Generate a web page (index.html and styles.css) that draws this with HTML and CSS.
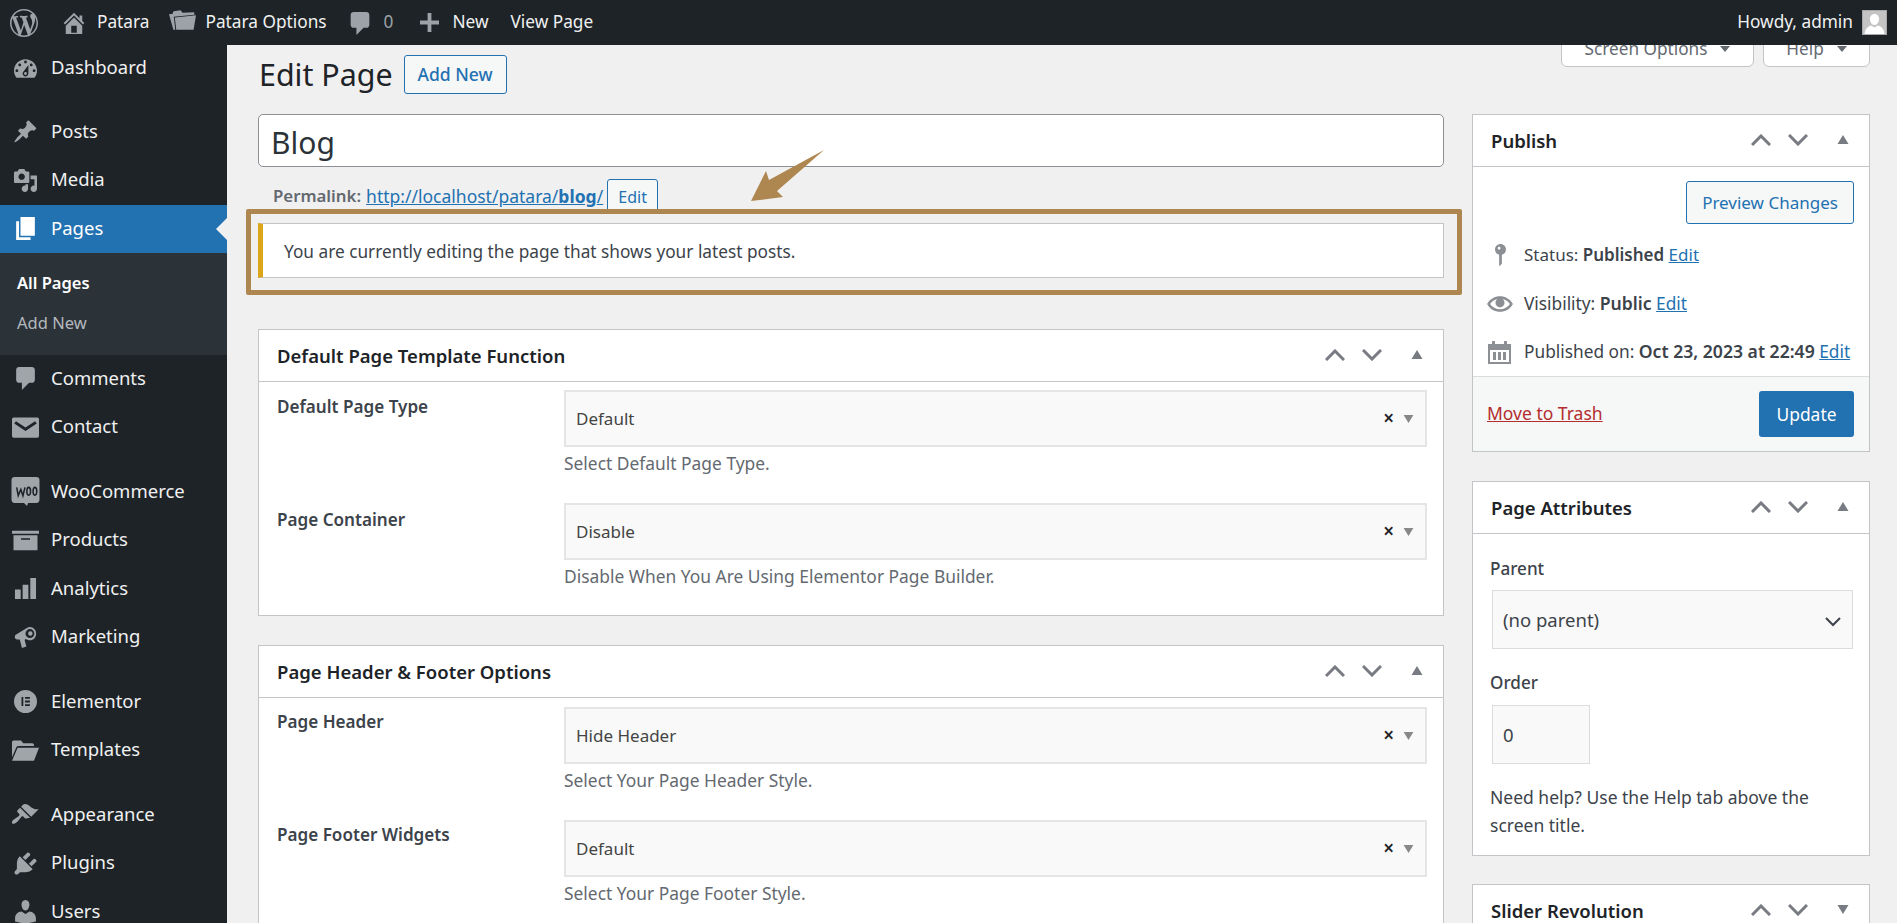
FILE: index.html
```html
<!DOCTYPE html>
<html lang="en">
<head>
<meta charset="utf-8">
<title>Edit Page</title>
<link rel="stylesheet" href="styles.css">
</head>
<body>
<svg class="sprite" width="0" height="0" aria-hidden="true">
  <symbol id="up" viewBox="0 0 20 12"><path d="M1 11 10 2l9 9" fill="none" stroke="currentColor" stroke-width="3"/></symbol>
  <symbol id="down" viewBox="0 0 20 12"><path d="M1 1l9 9 9-9" fill="none" stroke="currentColor" stroke-width="3"/></symbol>
  <symbol id="tri-up" viewBox="0 0 12 9"><path d="M6 0l5.500 9H.5z" fill="currentColor"/></symbol>
  <symbol id="tri-down" viewBox="0 0 12 9"><path d="M6 9 .5 0h11z" fill="currentColor"/></symbol>
</svg>

<header class="adminbar">
  <svg class="ab-logo" viewBox="0 0 20 20"><path d="M20 10c0-5.510-4.490-10-10-10C4.480 0 0 4.490 0 10c0 5.520 4.480 10 10 10 5.510 0 10-4.480 10-10zM7.780 15.370L4.370 6.220c.55-.02 1.170-.08 1.170-.08.5-.06.44-1.130-.06-1.110 0 0-1.450.11-2.370.11-.18 0-.37 0-.58-.01C4.120 2.690 6.870 1.110 10 1.110c2.330 0 4.450.87 6.050 2.340-.68-.11-1.650.39-1.650 1.580 0 .74.45 1.360.9 2.100.35.61.55 1.360.55 2.460 0 1.490-1.400 5-1.400 5l-3.030-8.370c.54-.02.82-.17.82-.17.5-.05.44-1.250-.06-1.220 0 0-1.440.12-2.380.12-.87 0-2.330-.12-2.330-.12-.5-.03-.56 1.200-.06 1.220l.92.08 1.260 3.410zM17.410 10c.24-.64.74-1.870.43-4.250.7 1.290 1.050 2.710 1.050 4.250 0 3.290-1.730 6.240-4.400 7.780.97-2.590 1.940-5.200 2.920-7.780zM6.100 18.090C3.120 16.650 1.110 13.530 1.110 10c0-1.300.23-2.480.72-3.590C3.250 10.300 4.670 14.200 6.100 18.090zm4.030-6.630l2.580 6.980c-.86.29-1.760.45-2.710.45-.79 0-1.570-.11-2.290-.33.81-2.380 1.620-4.740 2.420-7.100z"/></svg>
  <svg class="ab-icon ab-home" viewBox="2 2 16 16"><path d="M16 8.500l1.530 1.530-1.060 1.060L10 4.620l-6.470 6.470-1.060-1.060L10 2.500l4 4v-2h2v4zm-6-2.460l6 5.990V18H4v-5.970zM12 17v-5H8v5h4z"/></svg>
  <span class="ab-text ab-site">Patara</span>
  <svg class="ab-icon ab-folder" viewBox="0 0 28 20"><path d="M0 4l4-.6V2l1-1 7-1 2 2.500L26 2l.5 2.500L5 6.500 6.500 20H4.500z"/><path d="M6 7.500 28 5l-2.500 15H7.500z"/></svg>
  <span class="ab-text ab-options">Patara Options</span>
  <svg class="ab-icon ab-comment" viewBox="3 2 13 16"><path d="M5 2h9c1.100 0 2 .9 2 2v7c0 1.100-.9 2-2 2h-2l-5 5v-5H5c-1.100 0-2-.9-2-2V4c0-1.100.9-2 2-2z"/></svg>
  <span class="ab-text ab-count">0</span>
  <svg class="ab-icon ab-plus" viewBox="3 2 15 15"><path d="M18 8v3h-6v6H9v-6H3V8h6V2h3v6z"/></svg>
  <span class="ab-text ab-new">New</span>
  <span class="ab-text ab-view">View Page</span>
  <span class="ab-text ab-howdy">Howdy, admin</span>
  <svg class="ab-avatar" viewBox="0 0 25 25"><rect width="25" height="25" fill="#c4c4c4"/><path d="M12.500 4c3 0 4.500 2.500 4.500 5s-1.500 6-4.500 6-4.500-3.500-4.500-6 1.500-5 4.500-5zM2.500 25c0-6 3.500-8.500 6.500-9.500l3.500 2 3.500-2c3 1 6.500 3.500 6.500 9.500z" fill="#fff"/><rect x=".5" y=".5" width="24" height="24" fill="none" stroke="#aaa"/></svg>
</header>

<div class="shell">
  <nav class="sidebar">
    <a class="item"><span class="ico"><svg viewBox="2 3 16 13"><path d="M3.760 16h12.480c1.100-1.370 1.760-3.110 1.760-5 0-4.420-3.580-8-8-8s-8 3.580-8 8c0 1.890.66 3.630 1.760 5zM10 4c.55 0 1 .45 1 1s-.45 1-1 1-1-.45-1-1 .45-1 1-1zM6 6c.55 0 1 .45 1 1s-.45 1-1 1-1-.45-1-1 .45-1 1-1zm8 0c.55 0 1 .45 1 1s-.45 1-1 1-1-.45-1-1 .45-1 1-1zm-5.370 5.550L12 7v6c0 1.100-.9 2-2 2s-2-.9-2-2c0-.57.24-1.080.63-1.450zM4 10c.55 0 1 .45 1 1s-.45 1-1 1-1-.45-1-1 .45-1 1-1zm12 0c.55 0 1 .45 1 1s-.45 1-1 1-1-.45-1-1 .45-1 1-1zm-5 3c0-.55-.45-1-1-1s-1 .45-1 1 .45 1 1 1 1-.45 1-1z"/></svg></span>Dashboard</a>
    <a class="item sep"><span class="ico"><svg viewBox="1 1 18 18"><path d="M10.440 3.020l1.820-1.820 6.360 6.350-1.830 1.820c-1.050-.68-2.480-.57-3.410.36l-.75.75c-.92.93-1.040 2.350-.35 3.410l-1.830 1.820-2.410-2.410-2.800 2.790c-.42.42-3.380 2.710-3.800 2.290s1.860-3.390 2.280-3.810l2.790-2.790L4.100 9.360l1.830-1.820c1.050.69 2.480.57 3.400-.36l.75-.75c.93-.92 1.050-2.350.36-3.410z"/></svg></span>Posts</a>
    <a class="item"><span class="ico"><svg viewBox="1 1 18 18"><path d="M13 11V4c0-.55-.45-1-1-1h-1.670L9 1H5L3.670 3H2c-.55 0-1 .45-1 1v7c0 .55.45 1 1 1h10c.55 0 1-.45 1-1zM7 4.500c1.380 0 2.500 1.120 2.500 2.500S8.380 9.500 7 9.500 4.500 8.380 4.500 7 5.620 4.500 7 4.500zM14 6h5v10.500c0 1.380-1.120 2.500-2.500 2.500S14 17.880 14 16.500s1.120-2.500 2.500-2.500c.17 0 .34.02.5.05V9h-3V6zm-4 8.050V13h2v3.500c0 1.380-1.120 2.500-2.500 2.500S7 17.880 7 16.500 8.120 14 9.500 14c.17 0 .34.02.5.05z"/></svg></span>Media</a>
    <a class="item current"><span class="ico"><svg viewBox="3 2 13 16"><path d="M6 15V2h10v13H6zm-1 1h8v2H3V5h2v11z"/></svg></span>Pages</a>
    <div class="submenu">
      <a class="sub strong">All Pages</a>
      <a class="sub">Add New</a>
    </div>
    <a class="item"><span class="ico"><svg viewBox="3 2 13 16"><path d="M5 2h9c1.100 0 2 .9 2 2v7c0 1.100-.9 2-2 2h-2l-5 5v-5H5c-1.100 0-2-.9-2-2V4c0-1.100.9-2 2-2z"/></svg></span>Comments</a>
    <a class="item"><span class="ico ico-wide"><svg viewBox="0 0 24 18"><path d="M1.500 0h21A1.500 1.500 0 0 1 24 1.500v15a1.500 1.500 0 0 1-1.500 1.500h-21A1.500 1.500 0 0 1 0 16.500v-15A1.500 1.500 0 0 1 1.500 0zM3.500 3.500 2 5.500l10 6.500 10-6.500-1.500-2L12 9z" fill-rule="evenodd"/></svg></span>Contact</a>
    <a class="item sep"><span class="ico ico-woo"><svg viewBox="0 0 27 28"><path d="M3 0h21a3 3 0 0 1 3 3v19a3 3 0 0 1-3 3h-8l-1 3-3-3H3a3 3 0 0 1-3-3V3a3 3 0 0 1 3-3z"/><path d="M5 10l1.500 8 2.500-6 2 6 2-8M16.500 10c-2 0-2.500 7.500 0 7.500S19 10 16.500 10zM22.500 10c-2 0-2.500 7.500 0 7.500S25 10 22.500 10z" fill="none" stroke="#1d2327" stroke-width="1.500"/></svg></span>WooCommerce</a>
    <a class="item"><span class="ico ico-wide"><svg viewBox="1 4 18 13"><path d="M19 4v2H1V4h18zM2 7h16v10H2V7zm11 3V9H7v1h6z"/></svg></span>Products</a>
    <a class="item"><span class="ico ico-wide"><svg viewBox="0 0 24 24"><path d="M1 13h6v10H1zM9 8h6v15H9zM17 1h6v22h-6z"/></svg></span>Analytics</a>
    <a class="item"><span class="ico ico-wide"><svg viewBox="0 0 24 26"><path d="M1 10 14 2c1-.6 2-.8 3-.8 4 0 7 3.500 7 7.500s-3 7.500-7 7.500c-.8 0-1.500-.2-2-.4l-3-1-1 1 2 7.500-5 1.500-2.500-9.500H3c-2 0-3-1-3-2.500S0 11 1 10z"/><circle cx="17" cy="8.500" r="5" fill="#1d2327"/><circle cx="17.500" cy="8.500" r="2.500"/></svg></span>Marketing</a>
    <a class="item sep"><span class="ico ico-wide"><svg viewBox="0 0 26 26"><path fill-rule="evenodd" d="M13 0a13 13 0 1 0 0 26 13 13 0 0 0 0-26zM8.500 8h2v10h-2zM12.500 8h5.500v2h-5.500zM12.500 12h5.500v2h-5.500zM12.500 16h5.500v2h-5.500z"/></svg></span>Elementor</a>
    <a class="item"><span class="ico ico-wide"><svg viewBox="0 0 24 18"><path d="M0 15V1.500C0 .7.700 0 1.500 0H8l2 2.500h8c.8 0 1.500.7 1.500 1.500v1H6c-1 0-1.800.5-2.200 1.300zM5 6.500h19L19.500 18H0z"/></svg></span>Templates</a>
    <a class="item sep"><span class="ico ico-wide"><svg viewBox="1 2 19 15"><path d="M14.480 11.060L7.410 3.990l1.500-1.500c.5-.56 2.300-.47 3.510.32 1.210.8 1.430 1.280 2.910 2.100 1.180.64 2.450 1.260 4.450.85zm-.71.71L6.700 4.700 4.930 6.470c-.39.39-.39 1.020 0 1.410l1.060 1.060c.39.39.39 1.030 0 1.420-.6.6-1.430 1.110-2.210 1.690-.35.26-.7.53-1.010.84C1.430 13.230.4 14.990 1.200 15.800c.8.8 2.570-.23 3.910-1.570.31-.31.58-.66.85-1.010.58-.78 1.090-1.610 1.690-2.210.39-.39 1.020-.39 1.410 0l1.060 1.060c.39.39 1.020.39 1.410 0z"/></svg></span>Appearance</a>
    <a class="item"><span class="ico"><svg viewBox="2 2 16 16"><path d="M13.110 4.360L9.870 7.600 8 5.730l3.240-3.240c.35-.34 1.050-.2 1.560.32.52.51.66 1.210.31 1.550zm-8 1.770l.91-1.120 9.010 9.010-1.190.84c-.71.71-2.630 1.160-3.820 1.160H6.140L4.900 17.260c-.59.59-1.540.59-2.120 0-.59-.58-.59-1.530 0-2.120l1.240-1.240v-3.880c0-1.130.4-3.190 1.090-3.890zm7.260 3.970l3.240-3.240c.34-.35 1.040-.21 1.550.31.52.51.66 1.210.31 1.550l-3.240 3.250z"/></svg></span>Plugins</a>
    <a class="item"><span class="ico"><svg viewBox="2 2 16 16"><path d="M10 9.250c-2.270 0-2.730-3.440-2.730-3.440C7 4.020 7.820 2 9.970 2c2.160 0 2.980 2.020 2.710 3.810 0 0-.41 3.440-2.680 3.440zm0 2.570L12.720 10c2.390 0 4.520 2.330 4.520 4.530v2.490s-3.650 1.130-7.240 1.130c-3.650 0-7.240-1.130-7.240-1.130v-2.490c0-2.250 1.940-4.480 4.470-4.480z"/></svg></span>Users</a>
  </nav>

  <main class="main">
    <div class="heading">
      <h1 class="title">Edit Page</h1>
      <a class="btn-add">Add New</a>
      <div class="tabs">
        <span class="tab tab-screen">Screen Options<i class="caret"></i></span>
        <span class="tab tab-help">Help<i class="caret"></i></span>
      </div>
    </div>

    <div class="columns">
      <div class="content">
        <div class="title-input">Blog</div>
        <div class="permalink">
          <b>Permalink:</b>
          <a class="link">http://localhost/patara/<b>blog</b>/</a>
          <span class="edit-slug">Edit</span>
        </div>
        <div class="highlight">
          <div class="notice">You are currently editing the page that shows your latest posts.</div>
        </div>

        <section class="box box-function">
          <div class="box-head">
            <h2>Default Page Template Function</h2>
            <span class="ctrls"><svg class="chev"><use href="#up"/></svg><svg class="chev"><use href="#down"/></svg><svg class="tri"><use href="#tri-up"/></svg></span>
          </div>
          <div class="opts">
            <div class="opt">
              <label>Default Page Type</label>
              <div class="field">
                <div class="select"><span>Default</span><i class="x">×</i><svg class="sel-tri"><use href="#tri-down"/></svg></div>
                <p class="desc">Select Default Page Type.</p>
              </div>
            </div>
            <div class="opt">
              <label>Page Container</label>
              <div class="field">
                <div class="select"><span>Disable</span><i class="x">×</i><svg class="sel-tri"><use href="#tri-down"/></svg></div>
                <p class="desc">Disable When You Are Using Elementor Page Builder.</p>
              </div>
            </div>
          </div>
        </section>

        <section class="box box-footer">
          <div class="box-head">
            <h2>Page Header &amp; Footer Options</h2>
            <span class="ctrls"><svg class="chev"><use href="#up"/></svg><svg class="chev"><use href="#down"/></svg><svg class="tri"><use href="#tri-up"/></svg></span>
          </div>
          <div class="opts">
            <div class="opt">
              <label>Page Header</label>
              <div class="field">
                <div class="select"><span>Hide Header</span><i class="x">×</i><svg class="sel-tri"><use href="#tri-down"/></svg></div>
                <p class="desc">Select Your Page Header Style.</p>
              </div>
            </div>
            <div class="opt">
              <label>Page Footer Widgets</label>
              <div class="field">
                <div class="select"><span>Default</span><i class="x">×</i><svg class="sel-tri"><use href="#tri-down"/></svg></div>
                <p class="desc">Select Your Page Footer Style.</p>
              </div>
            </div>
          </div>
        </section>
      </div>

      <aside class="side">
        <section class="box box-publish">
          <div class="box-head">
            <h2>Publish</h2>
            <span class="ctrls"><svg class="chev"><use href="#up"/></svg><svg class="chev"><use href="#down"/></svg><svg class="tri"><use href="#tri-up"/></svg></span>
          </div>
          <div class="pub-body">
            <div class="pub-actions"><span class="btn-preview">Preview Changes</span></div>
            <div class="pub-row pub-status"><span class="pub-ico"><svg class="i-key" viewBox="6 2 8 16"><path d="M14 6c0 1.860-1.280 3.410-3 3.860V16c0 1-2 2-2 2V9.860c-1.720-.45-3-2-3-3.860 0-2.210 1.790-4 4-4s4 1.790 4 4zM8 5c0 .55.45 1 1 1s1-.45 1-1-.45-1-1-1-1 .45-1 1z"/></svg></span><span>Status: <b>Published</b> <a class="link">Edit</a></span></div>
            <div class="pub-row"><span class="pub-ico"><svg class="i-eye" viewBox="0 3 20 14"><path d="M19.700 9.400C17.700 6 14 3.900 10 3.900S2.300 6 .3 9.400L0 10l.3.6c2 3.400 5.700 5.500 9.700 5.500s7.700-2.100 9.700-5.500l.3-.6-.3-.6zM10 14.100c-3.100 0-6-1.600-7.700-4.100C3.600 8 5.700 6.600 8 6.100c-.9.6-1.500 1.700-1.500 2.900 0 1.900 1.600 3.500 3.500 3.500s3.500-1.600 3.500-3.500c0-1.200-.6-2.300-1.500-2.900 2.300.5 4.400 1.900 5.700 3.900-1.700 2.500-4.600 4.100-7.700 4.100z"/></svg></span><span>Visibility: <b>Public</b> <a class="link">Edit</a></span></div>
            <div class="pub-row"><span class="pub-ico"><svg class="i-cal" viewBox="0 0 23 23"><path fill-rule="evenodd" d="M0 3h4V1a1.500 1.500 0 0 1 3 0v2h9V1a1.500 1.500 0 0 1 3 0v2h4v20H0zM2 9v12h19V9z"/><path d="M5 11h3v8H5zM10 11h3v8h-3zM15 11h3v8h-3z"/></svg></span><span>Published on: <b>Oct 23, 2023 at 22:49</b> <a class="link">Edit</a></span></div>
          </div>
          <div class="pub-foot">
            <a class="trash">Move to Trash</a>
            <span class="btn-update">Update</span>
          </div>
        </section>

        <section class="box box-attrs">
          <div class="box-head">
            <h2>Page Attributes</h2>
            <span class="ctrls"><svg class="chev"><use href="#up"/></svg><svg class="chev"><use href="#down"/></svg><svg class="tri"><use href="#tri-up"/></svg></span>
          </div>
          <div class="attrs">
            <p class="attr-label">Parent</p>
            <div class="attr-select"><span>(no parent)</span><svg class="sel-chev" viewBox="0 0 16 10"><path d="M1 1l7 7 7-7" fill="none" stroke="currentColor" stroke-width="2"/></svg></div>
            <p class="attr-label attr-order">Order</p>
            <div class="attr-input">0</div>
            <p class="attr-help">Need help? Use the Help tab above the screen title.</p>
          </div>
        </section>

        <section class="box">
          <div class="box-head">
            <h2>Slider Revolution</h2>
            <span class="ctrls"><svg class="chev"><use href="#up"/></svg><svg class="chev"><use href="#down"/></svg><svg class="tri"><use href="#tri-down"/></svg></span>
          </div>
        </section>
      </aside>
    </div>

    <svg class="arrow" viewBox="0 0 74 52"><path d="M0 51 15 21 18 30 73 0 26 41 32 47z"/></svg>
  </main>
</div>
</body>
</html>
```

FILE: styles.css
```css
* { box-sizing: border-box; }
html, body { margin: 0; height: 100%; }
body {
  display: flex;
  flex-direction: column;
  overflow: hidden;
  background: #f0f0f1;
  color: #3c434a;
  font: 17.250px/1.4 "Noto Sans", "Open Sans", sans-serif;
}
.sprite { position: absolute; }
p, h1, h2 { margin: 0; }
a { text-decoration: none; }
i { font-style: normal; }

/* admin bar */
.adminbar {
  flex: 0 0 45px;
  display: flex;
  align-items: center;
  background: #1d2327;
  color: #f0f0f1;
  position: relative;
  z-index: 2;
  padding-left: 10px;
}
.ab-logo { width: 28px; height: 28px; fill: #9ca2a7; }
.ab-icon { fill: #9ca2a7; flex: none; }
.ab-text { white-space: nowrap; font-size: 17.250px; }
.ab-home { width: 22px; height: 22px; margin-left: 25px; }
.ab-site { margin-left: 12px; }
.ab-folder { width: 27px; height: 20px; margin-left: 20px; margin-top: -5px; }
.ab-options { margin-left: 9px; }
.ab-comment { width: 20px; height: 23px; margin-left: 23px; margin-top: 2px; }
.ab-count { margin-left: 14px; color: #9ca2a7; }
.ab-plus { width: 19px; height: 19px; margin-left: 27px; }
.ab-new { margin-left: 13px; }
.ab-view { margin-left: 22px; }
.ab-howdy { margin-left: auto; }
.ab-avatar { width: 25px; height: 25px; margin: 0 10px 0 9px; }

/* layout */
.shell { flex: 1; min-height: 0; display: flex; overflow: hidden; }

/* sidebar */
.sidebar {
  flex: 0 0 227px;
  background: #1d2327;
  overflow: hidden;
}
.item {
  display: flex;
  align-items: center;
  height: 48.500px;
  padding-bottom: 2px;
  color: #f0f0f1;
  font-size: 18.500px;
  white-space: nowrap;
  position: relative;
}
.item:first-child { margin: -1px 0 -1px; }
.sep { margin-top: 16px; }
.ico {
  flex: 0 0 51px;
  display: flex;
  justify-content: center;
  padding-right: 1px;
  margin-top: 2px;
}
.ico svg { width: 23px; height: 23px; fill: #a0a5aa; }
.ico-wide svg { width: 27px; height: 23px; }
.ico-woo svg { width: 29px; height: 29px; }
.current { background: #2271b1; color: #fff; }
.current .ico svg { fill: #fff; }
.current::after {
  content: "";
  position: absolute;
  right: 0;
  top: 50%;
  margin-top: -11px;
  border: 11px solid transparent;
  border-left-width: 0;
  border-right-color: #f0f0f1;
}
.submenu {
  background: #2c3338;
  height: 101.500px;
  padding-top: 10px;
  display: flex;
  flex-direction: column;
}
.sub {
  height: 40px;
  line-height: 40px;
  padding-left: 17px;
  font-size: 16.500px;
  color: #b4b9be;
}
.strong { color: #fff; font-weight: 600; }

/* main */
.main {
  flex: 1;
  min-width: 0;
  padding: 0 27px 0 31px;
  overflow: hidden;
  position: relative;
}
.heading { display: flex; height: 69px; align-items: flex-start; padding-left: 1px; }
.title {
  font-size: 30.400px;
  font-weight: 400;
  color: #1d2327;
  line-height: 40px;
  margin-top: 10px;
}
.btn-add {
  margin: 10px 0 0 11px;
  width: 103px;
  height: 39px;
  display: flex;
  align-items: center;
  justify-content: center;
  color: #2271b1;
  font-weight: 500;
  font-size: 17.500px;
  background: #f6f7f7;
  border: 1px solid #2271b1;
  border-radius: 3px;
}
.tabs { margin-left: auto; display: flex; gap: 9px; margin-top: -14px; }
.tab {
  height: 36px;
  background: #fff;
  border: 1px solid #c3c4c7;
  border-radius: 0 0 6px 6px;
  display: flex;
  align-items: center;
  justify-content: center;
  color: #646970;
  font-size: 17.200px;
}
.tab-screen { width: 193px; }
.tab-help { width: 107px; }
.caret {
  margin-left: 13px;
  border: 5px solid transparent;
  border-top: 6px solid #646970;
  border-bottom: 0;
}

.columns { display: flex; gap: 28px; align-items: flex-start; }
.content { flex: 0 0 1186px; min-width: 0; }
.side { flex: 0 0 398px; }

.title-input {
  height: 53px;
  background: #fff;
  border: 1px solid #8c8f94;
  border-radius: 5px;
  color: #2c3338;
  font-size: 30px;
  line-height: 55px;
  padding-left: 12px;
}
.permalink {
  height: 42px;
  padding: 17px 0 0 15px;
  display: flex;
  align-items: flex-start;
  font-size: 17.500px;
  line-height: 24px;
  color: #646970;
  white-space: pre;
}
.permalink > b { font-weight: 600; font-size: 16.800px; margin-right: 5px; }
.link { color: #2271b1; text-decoration: underline; }
.edit-slug {
  width: 51px;
  height: 35px;
  margin: -5px 0 0 4px;
  background: #f6f7f7;
  border: 1px solid #2271b1;
  border-radius: 3px;
  color: #2271b1;
  font-size: 16px;
  display: flex;
  align-items: center;
  justify-content: center;
}
.highlight {
  margin: 0 -18px 0 -12px;
  height: 86px;
  border: 5px solid #ae8650;
  border-radius: 2px;
  padding: 9px 13px 0 7px;
  position: relative;
  z-index: 1;
}
.notice {
  height: 55px;
  background: #fff;
  border: 1px solid #c3c4c7;
  border-left: 5px solid #dba617;
  padding: 4px 0 0 21px;
  display: flex;
  align-items: center;
  font-size: 17.250px;
  color: #3c434a;
}

/* boxes */
.box { background: #fff; border: 1px solid #c3c4c7; }
.box-function { margin-top: 34px; height: 287px; margin-bottom: 29px; }
.box-head {
  height: 52px;
  display: flex;
  align-items: center;
  justify-content: space-between;
  padding: 0 18px;
  border-bottom: 1px solid #c3c4c7;
}
.box-head h2 { font-size: 18.500px; font-weight: 600; color: #1d2327; }
.ctrls { display: flex; align-items: center; margin-top: -2px; }
.chev { width: 20px; height: 12px; color: #787c82; margin-right: 17px; }
.chev + .chev { margin-right: 29px; }
.tri { width: 12px; height: 9px; color: #787c82; margin-right: 2px; }

.opts { padding: 8px 16px 0 18px; }
.box-footer .opts { padding-top: 9px; }
.opt { display: flex; }
.opt label {
  flex: 0 0 287px;
  font-weight: 600;
  font-size: 17.100px;
  color: #3c434a;
  padding-top: 5px;
  line-height: 24px;
}
.box-footer .opt label { padding-top: 3px; }
.field { flex: 1; min-width: 0; height: 113px; }
.select {
  height: 57px;
  background: #f9f9f9;
  border: 2px solid #e5e5e5;
  display: flex;
  align-items: center;
  padding: 0 11px 0 10px;
  font-size: 17px;
  color: #444;
}
.select span { flex: 1; }
.x { color: #1d2327; font-size: 19px; font-weight: 600; line-height: 1; margin-right: 9px; }
.sel-tri { width: 11px; height: 8px; color: #888; }
.desc { color: #646970; font-size: 17.400px; line-height: 24px; margin-top: 4px; }

/* publish */
.box-publish { height: 338px; display: flex; flex-direction: column; margin-bottom: 29px; }
.pub-body { flex: 1; padding: 14px 15px 0 14px; }
.pub-actions { display: flex; justify-content: flex-end; height: 51px; }
.btn-preview {
  width: 168px;
  height: 43px;
  display: flex;
  align-items: center;
  justify-content: center;
  padding-top: 1px;
  background: #f6f7f7;
  border: 1px solid #2271b1;
  border-radius: 3px;
  color: #2271b1;
  font-size: 17px;
}
.pub-row { display: flex; align-items: center; height: 48px; font-size: 17.300px; white-space: nowrap; }
.pub-row b { font-weight: 600; font-size: 17.600px; }
.pub-status { font-size: 17px; padding-bottom: 2px; }
.pub-status b { font-size: 17px; }
.pub-ico { flex: 0 0 37px; display: flex; justify-content: flex-start; }
.pub-ico svg { fill: #8c8f94; }
.i-key { width: 13px; height: 22px; margin-left: 7px; }
.i-eye { width: 26px; height: 18px; }
.i-cal { width: 23px; height: 23px; margin-left: 1px; }
.pub-foot {
  height: 75px;
  background: #f6f7f7;
  border-top: 1px solid #dcdcde;
  display: flex;
  align-items: center;
  justify-content: space-between;
  padding: 0 15px 0 14px;
}
.trash { color: #b32d2e; text-decoration: underline; font-size: 17.500px; margin-top: -1px; }
.btn-update {
  width: 95px;
  height: 46px;
  display: flex;
  align-items: center;
  justify-content: center;
  background: #2271b1;
  border-radius: 3px;
  color: #fff;
  font-size: 17.400px;
}

/* attributes */
.box-attrs { height: 375px; margin-bottom: 28px; }
.attrs { padding: 23px 16px 0 17px; }
.attr-label { font-weight: 500; font-size: 17.100px; line-height: 24px; color: #3c434a; }
.attr-order { margin-top: 22px; }
.attr-select {
  height: 59px;
  margin: 9px 0 0 2px;
  background: #f9f9f9;
  border: 1px solid #dcdcde;
  display: flex;
  align-items: center;
  justify-content: space-between;
  padding: 0 11px 0 10px;
  font-size: 18.500px;
}
.sel-chev { width: 16px; height: 10px; color: #3c434a; margin-top: 4px; }
.attr-input {
  width: 98px;
  height: 59px;
  margin: 10px 0 0 2px;
  background: #f9f9f9;
  border: 1px solid #dcdcde;
  display: flex;
  align-items: center;
  padding: 0 10px;
  font-size: 18.500px;
}
.attr-help { margin-top: 19px; line-height: 28px; font-size: 17.500px; width: 340px; }

.arrow {
  position: absolute;
  left: 524px;
  top: 105px;
  width: 74px;
  height: 52px;
  fill: #ae8650;
}
```
